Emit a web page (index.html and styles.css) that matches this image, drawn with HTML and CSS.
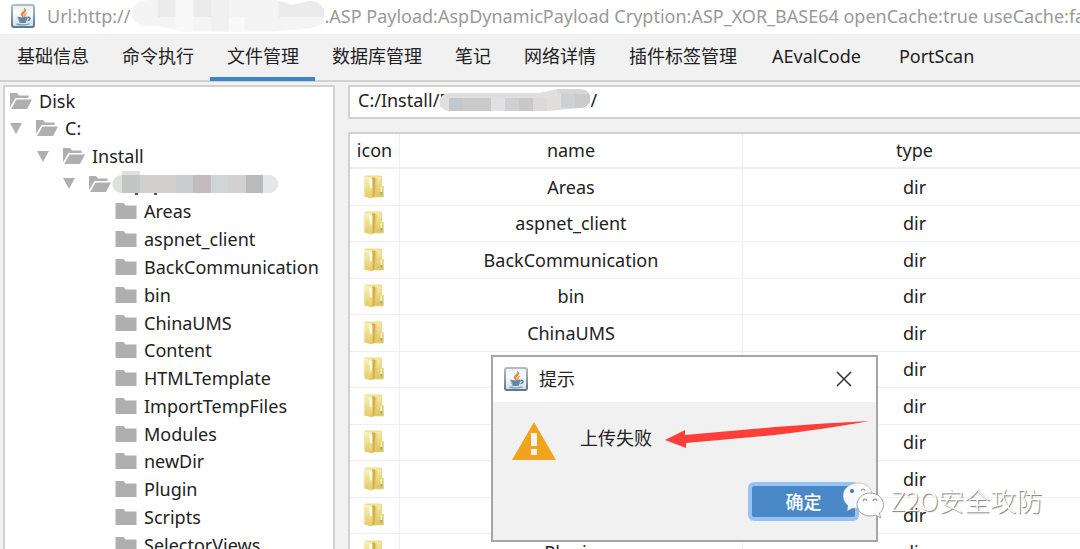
FILE: index.html
```
<!DOCTYPE html>
<html lang="zh-CN">
<head>
<meta charset="utf-8">
<title>文件管理</title>
<link rel="stylesheet" href="styles.css">
</head>
<body>
<svg class="defs" aria-hidden="true">
  <defs>
    <linearGradient id="cupBg" x1="0" y1="0" x2="0" y2="1"><stop offset="0" stop-color="#e8eef2"/><stop offset="0.35" stop-color="#fbfcfd"/><stop offset="1" stop-color="#d3dee6"/></linearGradient>
    <linearGradient id="cupEdge" x1="0" y1="0" x2="0" y2="1"><stop offset="0" stop-color="#a9bfcd"/><stop offset="1" stop-color="#5b7990"/></linearGradient>
    <linearGradient id="gold" x1="0" y1="0" x2="0" y2="1"><stop offset="0" stop-color="#f6eba6"/><stop offset="1" stop-color="#dfc25c"/></linearGradient>
    <linearGradient id="goldFront" x1="0" y1="0" x2="0" y2="1"><stop offset="0" stop-color="#faf3b4"/><stop offset="1" stop-color="#e3c965"/></linearGradient>
    <symbol id="java" viewBox="0 0 24 24">
      <rect x="1" y="1" width="22" height="22" rx="2" fill="url(#cupBg)" stroke="url(#cupEdge)" stroke-width="2"/>
      <path d="M12.2 13.2C8.8 10.6 10.2 8.9 12.6 7.2 13.8 6.3 14 5.500 13.500 4.300 15.800 6.500 14.600 7.700 13 9 11.500 10.300 11.300 11.200 12.200 13.200Z" fill="#ea8537" stroke="#ea8537" stroke-width="1"/>
      <path d="M13.400 13.200c1.500-1.500.2-2.200 2.800-4.300-3.500 1.200-4.200 2.500-2.800 4.300Z" fill="#f0a15f" stroke="#f0a15f" stroke-width=".8"/>
      <path d="M6.500 13.400c3 1.100 7.200 1 10 .1M7.500 15.500c2.500.8 6 .8 8.500 0M8.300 17.500c2 .6 4.800.6 6.800 0" fill="none" stroke="#6286a4" stroke-width="1.900"/>
      <path d="M16.800 13.300c2.700-.6 3.300 2.300-.2 3.600" fill="none" stroke="#5c83a3" stroke-width="1.500"/>
      <path d="M5.500 20c4 1.100 9.500 1 13-.2" fill="none" stroke="#7d9bb3" stroke-width="1.300"/>
    </symbol>
    <symbol id="open" viewBox="0 0 22 16">
      <path d="M0 16V0h7l2 2.500h9.500V5H5.500L0 14Z" fill="#afafaf"/>
      <path d="M6.500 6.500H22L17 16H1.200Z" fill="#afafaf"/>
    </symbol>
    <symbol id="closed" viewBox="0 0 21 16">
      <path d="M0 0h8l2 2.500h11V16H0Z" fill="#afafaf"/>
    </symbol>
    <symbol id="arrow" viewBox="0 0 12 11"><path d="M0 0h12L6 11Z" fill="#afafaf"/></symbol>
    <symbol id="folder" viewBox="0 0 20 24">
      <path d="M1 1h16.500v10.500H19.500V22H9L1 21Z" fill="url(#gold)" stroke="#e6d382" stroke-width=".8"/>
      <path d="M8 2.500h3V21L8.500 23Z" fill="#cfae4c"/>
      <path d="M11 3h1.500v18.500L10.500 22Z" fill="#e3ca6c"/>
      <path d="M.5 1.500 7 3c1 .3 1.500 1 1.500 2v18.500L.5 21.500Z" fill="url(#goldFront)"/>
      <path d="M5 3.500 8 4.200V13L6.500 13.500Z" fill="#fffdf0"/>
      <path d="M16.500 12h1.600v5h-1.600Z" fill="#f5efc8"/><path d="M16.500 17h1.600v2.500h-1.600Z" fill="#6cb6ad"/>
    </symbol>
  </defs>
</svg>

<header class="titlebar">
  <svg class="app-icon"><use href="#java"/></svg>
  <span class="title-text">Url:http://</span>
  <svg class="title-mask" viewBox="0 0 196 34" aria-hidden="true">
    <clipPath id="tm"><path d="M2 16C2 7 8 1 17 1L34 0H145L164 6 180 2C199 0 202 24 190 27 180 31 165 30 145 33H55L28 27C12 28 2 25 2 16Z"/></clipPath>
    <g clip-path="url(#tm)"><path d="M0 0h196v34H0Z" fill="#f4f4f4"/><path d="M28 0h18v18H28ZM150 0h46v18h-46ZM64 0h18v18H64Z" fill="#ebebeb"/><path d="M46 0h18v34H46ZM100 18h16v16h-16Z" fill="#f9f9f9"/><path d="M82 0h18v34H82Z" fill="#f0f0f0"/></g>
  </svg>
  <span class="title-text">.ASP Payload:AspDynamicPayload Cryption:ASP_XOR_BASE64 openCache:true useCache:false</span>
</header>

<nav class="tabs" role="tablist">
  <button class="tab" role="tab">基础信息</button>
  <button class="tab" role="tab">命令执行</button>
  <button class="tab active" role="tab" aria-selected="true">文件管理</button>
  <button class="tab" role="tab">数据库管理</button>
  <button class="tab" role="tab">笔记</button>
  <button class="tab" role="tab">网络详情</button>
  <button class="tab" role="tab">插件标签管理</button>
  <button class="tab plugin" role="tab">AEvalCode</button>
  <button class="tab plugin" role="tab">PortScan</button>
</nav>

<main class="workspace">
  <aside class="tree">
    <div class="node root"><svg class="ico"><use href="#open"/></svg>Disk</div>
    <div class="node"><svg class="caret"><use href="#arrow"/></svg><svg class="ico"><use href="#open"/></svg>C:</div>
    <div class="node level-2"><svg class="caret"><use href="#arrow"/></svg><svg class="ico"><use href="#open"/></svg>Install</div>
    <div class="node level-3"><svg class="caret"><use href="#arrow"/></svg><svg class="ico"><use href="#open"/></svg>
      <svg class="tree-mask" viewBox="0 0 167 25" aria-hidden="true">
        <clipPath id="rm"><path d="M10 4V0H28V4H157a9 9 0 0 1 0 18H11C-3 22-3 5 10 4Z"/></clipPath>
        <g clip-path="url(#rm)"><path d="M0 0h167v25H0Z" fill="#e0e0df"/><path d="M10 4h18v20H10Z" fill="#c4c6c5"/><path d="M28 4h36v20H28Z" fill="#d1d0ce"/><path d="M64 4h17v20H64Z" fill="#cbcdd1"/><path d="M81 4h18v20H81Z" fill="#c2bcbe"/><path d="M99 4h17v20H99Z" fill="#d0d5d6"/><path d="M116 4h18v20h-18Z" fill="#d1d1d1"/><path d="M134 4h17v20h-17Z" fill="#bababa"/><path d="M151 4h16v20h-16Z" fill="#e5e7ea"/></g>
        <path d="M23 22h3v2h-3ZM42 22h3v2h-3Z" fill="#555"/>
      </svg>
    </div>
    <div class="leaves">
      <div class="node"><svg class="ico"><use href="#closed"/></svg>Areas</div>
      <div class="node"><svg class="ico"><use href="#closed"/></svg>aspnet_client</div>
      <div class="node"><svg class="ico"><use href="#closed"/></svg>BackCommunication</div>
      <div class="node"><svg class="ico"><use href="#closed"/></svg>bin</div>
      <div class="node"><svg class="ico"><use href="#closed"/></svg>ChinaUMS</div>
      <div class="node"><svg class="ico"><use href="#closed"/></svg>Content</div>
      <div class="node"><svg class="ico"><use href="#closed"/></svg>HTMLTemplate</div>
      <div class="node"><svg class="ico"><use href="#closed"/></svg>ImportTempFiles</div>
      <div class="node"><svg class="ico"><use href="#closed"/></svg>Modules</div>
      <div class="node"><svg class="ico"><use href="#closed"/></svg>newDir</div>
      <div class="node"><svg class="ico"><use href="#closed"/></svg>Plugin</div>
      <div class="node"><svg class="ico"><use href="#closed"/></svg>Scripts</div>
      <div class="node"><svg class="ico"><use href="#closed"/></svg>SelectorViews</div>
    </div>
  </aside>

  <section class="files">
    <div class="path">
      <input class="path-input" type="text" aria-label="路径" value="C:/Install/P                              /">
      <svg class="path-mask" viewBox="0 0 152 24" aria-hidden="true">
        <clipPath id="pm"><path d="M10 5 100 5 118 1H140C155 1 155 19 142 20L110 23H12C-3 23-3 6 10 5Z"/></clipPath>
        <g clip-path="url(#pm)"><path d="M0 0h152v24H0Z" fill="#e0dfdd"/><path d="M10 10h14v14H10Z" fill="#c3c8cc"/><path d="M24 10h28v14H24Z" fill="#cacaca"/><path d="M52 10h14v14H52Z" fill="#dfe1e5"/><path d="M66 10h14v14H66Z" fill="#d0d0d0"/><path d="M80 10h14v14H80Z" fill="#c8c8ca"/><path d="M94 10h14v14H94Z" fill="#dbd9da"/><path d="M122 5h14v15h-14Z" fill="#ced0d4"/><path d="M136 5h15v15h-15Z" fill="#cacaca"/><path d="M118 1h34v5h-34Z" fill="#d7d7d9"/></g>
      </svg>
    </div>
    <div class="listing">
      <table class="grid">
        <colgroup><col class="col-icon"><col><col></colgroup>
        <thead><tr><th>icon</th><th>name</th><th>type</th></tr></thead>
        <tbody>
          <tr><td><svg class="folder"><use href="#folder"/></svg></td><td>Areas</td><td>dir</td></tr>
          <tr><td><svg class="folder"><use href="#folder"/></svg></td><td>aspnet_client</td><td>dir</td></tr>
          <tr><td><svg class="folder"><use href="#folder"/></svg></td><td>BackCommunication</td><td>dir</td></tr>
          <tr><td><svg class="folder"><use href="#folder"/></svg></td><td>bin</td><td>dir</td></tr>
          <tr><td><svg class="folder"><use href="#folder"/></svg></td><td>ChinaUMS</td><td>dir</td></tr>
          <tr><td><svg class="folder"><use href="#folder"/></svg></td><td>Content</td><td>dir</td></tr>
          <tr><td><svg class="folder"><use href="#folder"/></svg></td><td>HTMLTemplate</td><td>dir</td></tr>
          <tr><td><svg class="folder"><use href="#folder"/></svg></td><td>ImportTempFiles</td><td>dir</td></tr>
          <tr><td><svg class="folder"><use href="#folder"/></svg></td><td>Modules</td><td>dir</td></tr>
          <tr><td><svg class="folder"><use href="#folder"/></svg></td><td>newDir</td><td>dir</td></tr>
          <tr><td><svg class="folder"><use href="#folder"/></svg></td><td>Plugin</td><td>dir</td></tr>
        </tbody>
      </table>
    </div>
  </section>
</main>

<div class="dialog" role="dialog" aria-labelledby="dlg-title">
  <div class="dialog-head">
    <svg class="app-icon"><use href="#java"/></svg>
    <span id="dlg-title" class="dialog-title">提示</span>
    <button class="close" aria-label="关闭"><svg viewBox="0 0 16 16"><path d="M1 1 15 15M15 1 1 15" fill="none" stroke="#333" stroke-width="1.500"/></svg></button>
  </div>
  <div class="dialog-body">
    <svg class="warn" viewBox="0 0 44 38"><path d="M22 0 44 38H0Z" fill="#f0a31c"/><path d="M19 11h6v13h-6ZM19 27h6v6h-6Z" fill="#f2f2f2"/></svg>
    <span class="message">上传失败</span>
  </div>
  <div class="dialog-foot"><button class="ok">确定</button></div>
</div>

<svg class="pointer" viewBox="0 0 206 32" aria-hidden="true"><path d="M0 19 20 9V14L110 6Q160 2 205 0 160 8 110 14L21 22V27Z" fill="#fe3e39"/></svg>

<div class="watermark">
  <svg class="wechat" viewBox="0 0 44 38" aria-hidden="true">
    <path d="M16 2C7 2 1 8 1 15c0 4 2 7 5 9.500L5 30l6-3c2 .6 4 .7 6 .5 6-.3 13-6 13-13C30 7 24 2 16 2Z" fill="#fff" fill-opacity=".93" stroke="#999" stroke-width=".5"/>
    <path d="M28 12c-7 0-13 5-13 12 0 6 6 11 13 11 2 0 4-.4 5.500-1l5 3-1-5c2.500-2 4-5 4-8 0-7-6-12-13.500-12Z" fill="#fff" fill-opacity=".97" stroke="#888" stroke-width=".8"/>
    <circle cx="10" cy="10" r="2" fill="#4177ab"/><path d="M19 10a2 2 0 0 1 4 0" fill="none" stroke="#888" stroke-width="1"/>
    <path d="M21 20a2 2 0 0 1 4 0M31 20a2 2 0 0 1 4 0" fill="none" stroke="#777" stroke-width="1"/>
  </svg>
  <span>Z2O安全攻防</span>
</div>
</body>
</html>
```
FILE: styles.css
```
* { box-sizing: border-box; }

body {
  margin: 0;
  height: 100vh;
  overflow: hidden;
  display: flex;
  flex-direction: column;
  position: relative;
  background: #f1f1f1;
  color: #222;
  font: 18px/28px "Noto Sans", "Noto Sans CJK SC", sans-serif;
}

button, input { font: inherit; color: inherit; }
svg { display: block; flex: none; }
.defs { position: absolute; width: 0; height: 0; }

.titlebar {
  display: flex;
  align-items: center;
  flex: none;
  height: 34px;
  padding: 0 0 2px 11px;
  overflow: hidden;
  background: #fff;
  color: #999;
  white-space: nowrap;
}
.app-icon { width: 24px; height: 24px; }
.titlebar .app-icon { margin-right: 12px; }
.title-mask { width: 194px; height: 34px; }

.tabs {
  display: flex;
  flex: none;
  height: 48px;
  border-bottom: 2px solid #d2d2d2;
}
.tab {
  height: 47px;
  padding: 0 16px 0 17px;
  border: 0;
  border-bottom: 4px solid transparent;
  background: none;
  white-space: nowrap;
}
.tab.plugin { padding: 0 19px; }
.tab.active { border-bottom-color: #4083c9; }

.workspace {
  display: flex;
  flex: 1;
  min-height: 0;
  gap: 13px;
  padding: 3px 0 0 3px;
}

.tree {
  flex: none;
  width: 332px;
  overflow: hidden;
  border: 2px solid #d2d2d2;
  border-bottom: 0;
  background: #fff;
}
.node {
  display: flex;
  align-items: center;
  height: 28px;
  padding-left: 5px;
  white-space: nowrap;
}
.node.root { height: 27px; }
.node.level-2 { padding-left: 32px; }
.node.level-3 { height: 27px; padding-left: 58px; }
.caret { width: 12px; height: 11px; margin-right: 14px; }
.node .ico { width: 22px; height: 16px; margin-right: 7px; }
.leaves { padding-left: 105px; }
.leaves .node:nth-child(4n+5) { height: 27px; }
.tree-mask { width: 167px; height: 25px; margin-left: -6px; }

.files {
  display: flex;
  flex: 1;
  flex-direction: column;
  gap: 13px;
  min-width: 0;
}
.path { position: relative; flex: none; }
.path-input {
  display: block;
  width: 100%;
  height: 34px;
  padding: 0 0 4px 8px;
  border: 2px solid #d2d2d2;
  border-right: 0;
  border-radius: 0;
  background: #fff;
}
.path-mask { position: absolute; left: 91px; top: 3px; width: 152px; height: 24px; }

.listing {
  flex: 1;
  min-height: 0;
  overflow: hidden;
  border: 2px solid #d2d2d2;
  border-right: 0;
  border-bottom: 0;
  background: #fff;
}
.grid { width: calc(100% + 6px); table-layout: fixed; border-collapse: separate; border-spacing: 0; }
.col-icon { width: 50px; }
.grid th, .grid td {
  height: 36px;
  padding: 0 0 1px;
  border-right: 1px solid #efefef;
  border-bottom: 1px solid #efefef;
  font-weight: 400;
  text-align: center;
}
.grid th { height: 35px; border-bottom-width: 2px; }
.grid th:last-child, .grid td:last-child { border-right: 0; }
.grid tr:nth-child(odd) td { height: 37px; }
.folder { width: 20px; height: 24px; margin: 0 auto; }
.grid td:first-child { padding-right: 2px; }

.dialog {
  position: absolute;
  left: 491px;
  top: 355px;
  width: 387px;
  border: 2px solid #a5a5a5;
  background: #f1f1f1;
}
.dialog-head {
  display: flex;
  align-items: center;
  height: 45px;
  padding: 0 24px 2px 11px;
  background: #fff;
}
.dialog-title { margin-left: 11px; }
.close { margin-left: auto; padding: 0; border: 0; background: none; }
.close svg { width: 16px; height: 16px; }
.dialog-body { display: flex; align-items: flex-start; padding: 20px 19px 0; }
.warn { width: 44px; height: 38px; }
.message { margin: 2px 0 0 24px; }
.dialog-foot { display: flex; justify-content: flex-end; padding: 22px 17px 19px; }
.ok {
  width: 111px;
  height: 39px;
  padding: 0;
  border: 4px solid #97c3f3;
  border-radius: 6px;
  background: #4a88c7;
  color: #fff;
  font-weight: 500;
}

.pointer { position: absolute; left: 665px; top: 421px; width: 206px; height: 32px; }

.watermark {
  position: absolute;
  left: 842px;
  top: 481px;
  display: flex;
  align-items: center;
  gap: 4px;
  color: #fff;
  font-family: "Noto Sans CJK SC", sans-serif;
  font-weight: 300;
  font-size: 26px;
  line-height: 38px;
  text-shadow: 1px 1px 1px #777;
  white-space: nowrap;
}
.wechat { width: 44px; height: 38px; }
```
